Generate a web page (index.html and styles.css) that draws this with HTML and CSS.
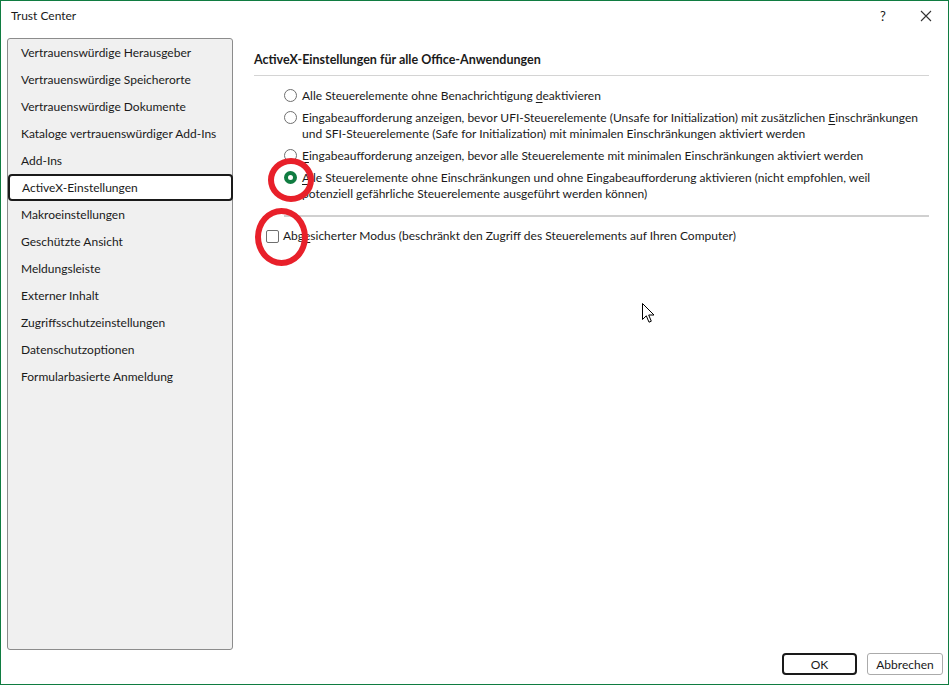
FILE: index.html
```html
<!DOCTYPE html>
<html lang="de">
<head>
    <meta charset="UTF-8">
    <title>Trust Center</title>
    <link rel="stylesheet" href="styles.css">
</head>
<body>
    <div class="window">
        <header class="titlebar">
            <span class="title">Trust Center</span>
            <span class="help">?</span>
            <span class="close">
                <svg width="12" height="12" viewBox="0 0 12 12"><path d="M1 1 L11 11 M11 1 L1 11" stroke="#333" stroke-width="1.1" fill="none"/></svg>
            </span>
        </header>

        <div class="body">
            <nav class="sidebar">
                <ul>
                    <li>Vertrauenswürdige Herausgeber</li>
                    <li>Vertrauenswürdige Speicherorte</li>
                    <li>Vertrauenswürdige Dokumente</li>
                    <li>Kataloge vertrauenswürdiger Add-Ins</li>
                    <li>Add-Ins</li>
                    <li class="selected">ActiveX-Einstellungen</li>
                    <li>Makroeinstellungen</li>
                    <li>Geschützte Ansicht</li>
                    <li>Meldungsleiste</li>
                    <li>Externer Inhalt</li>
                    <li>Zugriffsschutzeinstellungen</li>
                    <li>Datenschutzoptionen</li>
                    <li>Formularbasierte Anmeldung</li>
                </ul>
            </nav>

            <main class="panel">
                <h2 class="heading">ActiveX-Einstellungen für alle Office-Anwendungen</h2>
                <div class="radios">
                    <div class="option">
                        <span class="radio"></span>
                        <span class="label">Alle Steuerelemente ohne Benachrichtigung <u>d</u>eaktivieren</span>
                    </div>
                    <div class="option">
                        <span class="radio"></span>
                        <span class="label">Eingabeaufforderung anzeigen, bevor UFI-Steuerelemente (Unsafe for Initialization) mit zusätzlichen <u>E</u>inschränkungen<br>und SFI-Steuerelemente (Safe for Initialization) mit minimalen Einschränkungen aktiviert werden</span>
                    </div>
                    <div class="option">
                        <span class="radio"></span>
                        <span class="label"><u>E</u>ingabeaufforderung anzeigen, bevor alle Steuerelemente mit minimalen Einschränkungen aktiviert werden</span>
                    </div>
                    <div class="option">
                        <span class="radio checked"></span>
                        <span class="label"><u>A</u>lle Steuerelemente ohne Einschränkungen und ohne Eingabeaufforderung aktivieren (nicht empfohlen, weil<br>potenziell gefährliche Steuerelemente ausgeführt werden können)</span>
                    </div>
                </div>
                <div class="divider"></div>
                <div class="check-row">
                    <span class="checkbox"></span>
                    <span class="label">Abg<u>e</u>sicherter Modus (beschränkt den Zugriff des Steuerelements auf Ihren Computer)</span>
                </div>
            </main>
        </div>

        <footer class="buttons">
            <button class="btn default">OK</button>
            <button class="btn">Abbrechen</button>
        </footer>

        <!-- annotation rings + mouse pointer -->
        <div class="ring ring-radio"></div>
        <div class="ring ring-check"></div>
        <svg class="pointer" width="13" height="21" viewBox="0 0 13 21">
            <path d="M0.5 0.5 L0.5 16.5 L4.3 12.8 L7 19.2 L9.3 18.2 L6.7 12 L12 12 Z" fill="#fff" stroke="#000" stroke-width="1" stroke-linejoin="round"/>
        </svg>
    </div>
</body>
</html>
```

FILE: styles.css
```css
* {
    box-sizing: border-box;
}
body {
    margin: 0;
    font-family: Lato, "Noto Sans", sans-serif;
    font-size: 12px;
    color: #1a1a1a;
    background: #fff;
}
.window {
    position: relative;
    width: 949px;
    height: 685px;
    border: 1px solid #107c41;
    display: flex;
    flex-direction: column;
    overflow: hidden;
}
.titlebar {
    height: 37px;
    display: flex;
    align-items: flex-start;
    padding: 5px 0 0 10px;
    line-height: 20px;
    flex-shrink: 0;
}
.title {
    flex: 1;
}
.help {
    width: 20px;
    text-align: center;
    font-size: 13px;
    margin-right: 27px;
}
.close {
    width: 12px;
    height: 20px;
    display: flex;
    align-items: center;
    margin-right: 16px;
}
.body {
    flex: 1;
    display: flex;
    min-height: 0;
}
.sidebar {
    width: 226px;
    height: 612px;
    margin-left: 6px;
    background: #f0f0f0;
    border: 1px solid #8c8c8c;
    border-radius: 3px;
    flex-shrink: 0;
}
.sidebar ul {
    list-style: none;
    margin: 0;
    padding: 0;
}
.sidebar li {
    height: 27px;
    line-height: 27px;
    padding-left: 13px;
    white-space: nowrap;
}
.sidebar li.selected {
    border: 2px solid #1a1a1a;
    border-radius: 4px;
    background: #fff;
    line-height: 23px;
    padding-left: 12px;
    margin-right: -1px;
}
.panel {
    flex: 1;
    min-width: 0;
    padding: 14px 19px 0 21px;
}
.heading {
    margin: 0;
    font-size: 12.5px;
    font-weight: bold;
    line-height: 16px;
    padding-bottom: 7px;
    border-bottom: 1px solid #d4d4d4;
}
.radios {
    margin-top: 12px;
    padding-left: 30px;
    display: flex;
    flex-direction: column;
    gap: 6px;
}
.option {
    display: flex;
    align-items: flex-start;
    gap: 5px;
    line-height: 16px;
    white-space: nowrap;
}
.radio {
    width: 13px;
    height: 13px;
    margin-top: 1px;
    border: 1px solid #6f6f6f;
    border-radius: 50%;
    background: #fff;
    flex-shrink: 0;
}
.radio.checked {
    border: 4px solid #107c41;
}
.divider {
    height: 2px;
    margin: 13px 0 0 30px;
    background: #d0d0d0;
}
.check-row {
    margin-top: 11px;
    padding-left: 12px;
    display: flex;
    align-items: center;
    gap: 4px;
    line-height: 16px;
}
.checkbox {
    width: 13px;
    height: 13px;
    border: 1px solid #6f6f6f;
    border-radius: 2px;
    background: #fff;
}
u {
    text-underline-offset: 2px;
}
.buttons {
    height: 35px;
    flex-shrink: 0;
    display: flex;
    justify-content: flex-end;
    align-items: flex-start;
    gap: 10px;
    padding: 4px 5px 0 0;
}
.btn {
    height: 22px;
    width: 76px;
    font-family: inherit;
    font-size: 12px;
    color: #1a1a1a;
    background: #fff;
    border: 1px solid #ababab;
    border-radius: 3px;
    padding: 0;
}
.btn.default {
    border: 2px solid #1a1a1a;
    border-radius: 4px;
    width: 75px;
}
.ring {
    position: absolute;
    border: 6px solid #e8202a;
    border-radius: 50%;
}
.ring-radio {
    left: 267px;
    top: 157px;
    width: 46px;
    height: 44px;
}
.ring-check {
    left: 254px;
    top: 207px;
    width: 53px;
    height: 58px;
}
.pointer {
    position: absolute;
    left: 641px;
    top: 302px;
}
```
